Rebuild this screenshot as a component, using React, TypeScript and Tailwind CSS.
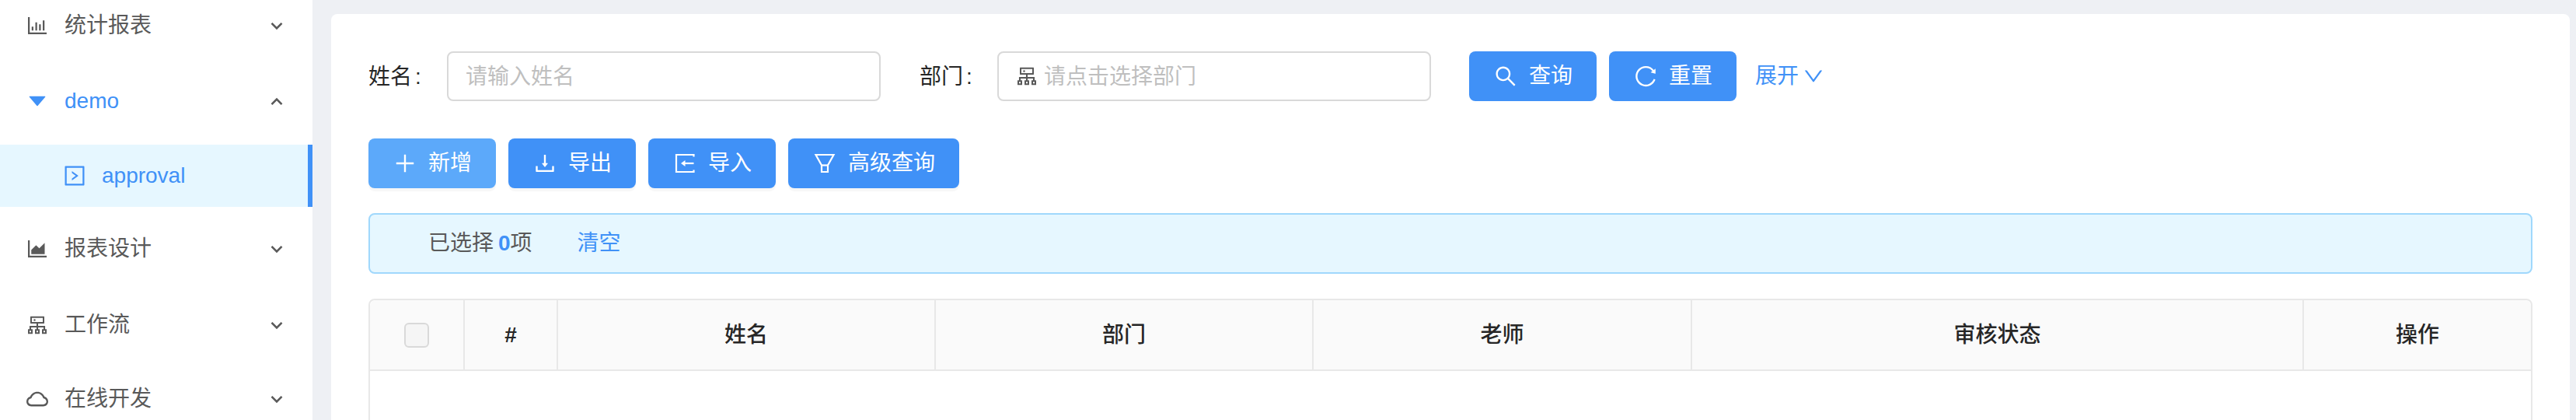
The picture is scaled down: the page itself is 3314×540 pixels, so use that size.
import type { ReactNode } from "react"
import {
    AiFillCaretDown,
    AiOutlineAreaChart,
    AiOutlineBarChart,
    AiOutlineCloud,
    AiOutlineCluster,
    AiOutlineDownload,
    AiOutlineDown,
    AiOutlinePlus,
    AiOutlineReload,
    AiOutlineRightSquare,
    AiOutlineSearch,
} from "react-icons/ai"

const FONT = "font-['Liberation_Sans','Noto_Sans_CJK_SC',sans-serif]"

// menu arrow, two short bars
const MenuArrow = ({ up }: { up?: boolean }) => (
    <svg width="16" height="11" viewBox="0 0 16 11" fill="none" stroke="#595959" strokeWidth="2.6" className={`shrink-0 ${up ? "rotate-180" : ""}`}>
        <path d="M1.5 1.8L8 8.3l6.5-6.5" />
    </svg>
)

const ImportIcon = () => (
    <svg width="32" height="32" viewBox="0 0 32 32" fill="none" stroke="white" strokeWidth="2.2" className="shrink-0">
        <path d="M27.5 7.5V5H5v22h22.5v-2.5" />
        <path d="M27.5 16H15" />
        <path d="M16.5 12v8L11 16z" fill="white" stroke="none" />
    </svg>
)

const FunnelIcon = () => (
    <svg width="32" height="32" viewBox="0 0 32 32" fill="none" stroke="white" strokeWidth="2.2" className="shrink-0">
        <path d="M4.5 5h23L20 18.5V27h-8v-8.500z" />
        <path d="M12 18.500h8" />
    </svg>
)

const NavItem = ({ icon, label, className = "" }: { icon: ReactNode; label: string; className?: string }) => (
    <div className={`h-24 flex items-center pl-8 pr-[38px] text-[#595959] ${className}`}>
        <span className="w-[51px] flex items-center">{icon}</span>
        <span className="text-[28px] flex-1">{label}</span>
        <MenuArrow />
    </div>
)

const ActionButton = ({ icon, label, light, flat, className }: { icon: ReactNode; label: string; light?: boolean; flat?: boolean; className: string }) => (
    <button className={`h-16 rounded-lg flex items-center justify-center gap-[14px] text-white text-[28px] ${flat ? "" : "shadow-[0_4px_0_rgba(0,0,0,0.03)]"} ${light ? "bg-[#5ca9fa]" : "bg-[#4091f7]"} ${className}`}>
        {icon}
        <span>{label}</span>
    </button>
)

const HeaderCell = ({ label, className }: { label: ReactNode; className: string }) => (
    <div className={`flex items-center justify-center border-r-2 border-[#e8e8e8] text-[28px] font-medium text-[#262626] ${className}`}>
        {label}
    </div>
)

export default function App() {
    return (
        <div className={`${FONT} w-[3314px] h-[540px] overflow-hidden flex bg-[#eef0f4]`}>
            {/* Sidebar */}
            <aside className="w-[402px] h-[600px] shrink-0 bg-white -mt-[15px]">
                <NavItem icon={<AiOutlineBarChart size={32} />} label="统计报表" />
                <div className="h-24 mt-px flex items-center pl-[33px] pr-[38px] text-[#4091f7]">
                    <span className="w-[50px] flex items-center">
                        <AiFillCaretDown size={30} />
                    </span>
                    <span className="text-[28px] flex-1">demo</span>
                    <MenuArrow up />
                </div>
                <div className="h-20 bg-[#e6f7ff] border-r-[6px] border-[#4091f7] flex items-center pl-20 text-[#4091f7] mt-2">
                    <AiOutlineRightSquare size={32} className="shrink-0 mr-[19px]" />
                    <span className="text-[28px]">approval</span>
                </div>
                <NavItem icon={<AiOutlineAreaChart size={32} />} label="报表设计" className="mt-1.5" />
                <NavItem icon={<AiOutlineCluster size={32} />} label="工作流" className="mt-0.5" />
                <NavItem icon={<AiOutlineCloud size={32} />} label="在线开发" className="-mt-px" />
            </aside>

            {/* Main */}
            <main className="flex-1 pl-6 pr-2 pt-[18px]">
                <div className="bg-white rounded-t-lg h-[600px] pl-12 pr-12 pt-12">
                    <div className="flex items-center h-16">
                        <span className="text-[28px] text-[#262626] w-[101px] pt-0.5">姓名<span className="ml-1">:</span></span>
                        <div className="w-[558px] h-16 border-2 border-[#d9d9d9] rounded-lg flex items-center pl-[22px] text-[28px] text-[#bfbfbf]">
                            <span className="pt-0.5">请输入姓名</span>
                        </div>
                        <span className="text-[28px] text-[#262626] ml-[50px] w-[100px] pt-0.5">部门<span className="ml-1">:</span></span>
                        <div className="w-[558px] h-16 border-2 border-[#d9d9d9] rounded-lg flex items-center pl-5 text-[28px] text-[#bfbfbf] gap-1.5">
                            <AiOutlineCluster size={32} className="text-[#595959] shrink-0" />
                            <span className="pt-0.5">请点击选择部门</span>
                        </div>
                        <ActionButton flat icon={<AiOutlineSearch size={32} />} label="查询" className="w-[164px] ml-[49px]" />
                        <ActionButton flat icon={<AiOutlineReload size={32} />} label="重置" className="w-[164px] ml-4" />
                        <span className="ml-6 text-[28px] text-[#4091f7] flex items-center gap-1">
                            展开
                            <AiOutlineDown size={30} />
                        </span>
                    </div>

                    <div className="flex gap-4 mt-12">
                        <ActionButton icon={<AiOutlinePlus size={32} />} label="新增" light className="w-[164px]" />
                        <ActionButton icon={<AiOutlineDownload size={32} />} label="导出" className="w-[164px]" />
                        <ActionButton icon={<ImportIcon />} label="导入" className="w-[164px]" />
                        <ActionButton icon={<FunnelIcon />} label="高级查询" className="w-[220px]" />
                    </div>

                    <div className="mt-8 h-[78px] border-2 border-[#a0d8fc] bg-[#e6f7ff] rounded-lg flex items-center pl-[75px] text-[28px] text-[#595959]">
                        <span>已选择</span>
                        <span className="ml-1.5 font-bold text-[#4091f7]">0</span>
                        <span>项</span>
                        <span className="ml-[58px] text-[#4091f7]">清空</span>
                    </div>

                    <div className="mt-8 border-2 border-[#e8e8e8] rounded-t-lg h-[300px]">
                        <div className="h-[91px] flex bg-[#fafafa] border-b-2 border-[#e8e8e8] rounded-t-lg">
                            <div className="w-[122px] flex items-center justify-center border-r-2 border-[#e8e8e8]">
                                <span className="w-8 h-8 rounded-md border-2 border-[#d9d9d9] bg-[#f5f5f5]" />
                            </div>
                            <HeaderCell label={<span className="font-bold">#</span>} className="w-[120px]" />
                            <HeaderCell label="姓名" className="w-[486px]" />
                            <HeaderCell label="部门" className="w-[486px]" />
                            <HeaderCell label="老师" className="w-[487px]" />
                            <HeaderCell label="审核状态" className="w-[787px]" />
                            <div className="flex-1 flex items-center justify-center text-[28px] font-medium text-[#262626]">操作</div>
                        </div>
                    </div>
                </div>
            </main>
        </div>
    )
}
